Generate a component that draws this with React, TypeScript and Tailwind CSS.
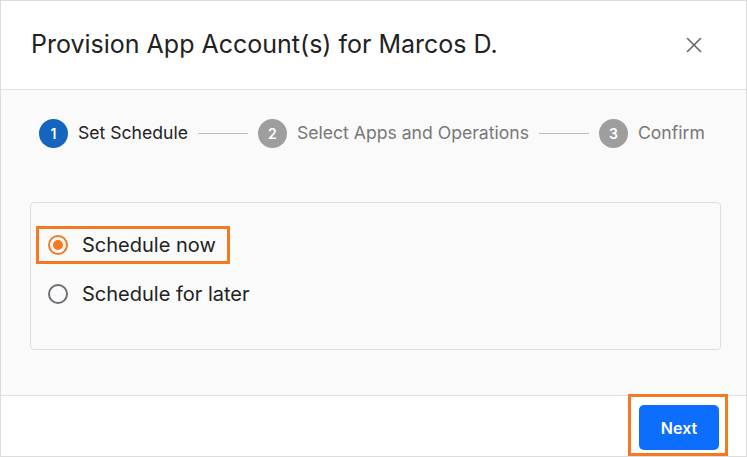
import { X } from "lucide-react";

const steps = [
  { n: 1, label: "Set Schedule", active: true },
  { n: 2, label: "Select Apps and Operations", active: false },
  { n: 3, label: "Confirm", active: false },
];

export default function App() {
  return (
    <div
      className="w-[747px] h-[457px] flex flex-col bg-white border border-[#dcdcdc] text-[#222]"
      style={{ fontFamily: "Inter, 'Noto Sans', sans-serif" }}
    >
      {/* header */}
      <div className="h-[89px] shrink-0 flex items-center justify-between pl-[30px] pr-[39px] border-b border-[#e0e0e0]">
        <h1 className="text-[25px] font-normal text-[#222]">Provision App Account(s) for Marcos D.</h1>
        <X className="w-[26px] h-[26px] text-[#666]" strokeWidth={1.5} />
      </div>

      {/* body */}
      <div className="flex-1 bg-[#fafafa] px-[29px] pt-[29px]">
        <div className="flex items-center pl-[9px] gap-[10px]">
          {steps.map((s, i) => (
            <div key={s.n} className="flex items-center gap-[10px]">
              {i > 0 && <div className="w-[50px] h-px bg-[#bdbdbd]" />}
              <div
                className={
                  s.active
                    ? "w-[29px] h-[29px] rounded-full bg-[#1565c0] text-white text-[14px] font-semibold flex items-center justify-center"
                    : "w-[29px] h-[29px] rounded-full bg-[#9e9e9e] text-white text-[14px] font-semibold flex items-center justify-center"
                }
              >
                {s.n}
              </div>
              <span className={s.active ? "text-[17.6px] text-[#222]" : "text-[17.6px] text-[#777]"}>{s.label}</span>
            </div>
          ))}
        </div>

        <div className="mt-[54px] w-[691px] h-[148px] border border-[#dedede] rounded-[4px] pt-[23px] pl-[5px]">
          <div className="inline-flex items-center gap-[14px] border-[3px] border-[#f47920] pl-[9px] pr-[11px] h-[38px]">
            <div className="w-[20px] h-[20px] rounded-full border-2 border-[#f47920] flex items-center justify-center">
              <div className="w-[10px] h-[10px] rounded-full bg-[#f47920]" />
            </div>
            <span className="text-[20px] text-[#222]">Schedule now</span>
          </div>
          <div className="flex items-center gap-[14px] pl-[12px] mt-[11px] h-[38px]">
            <div className="w-[20px] h-[20px] rounded-full border-2 border-[#6b6f76]" />
            <span className="text-[20px] text-[#222]">Schedule for later</span>
          </div>
        </div>
      </div>

      {/* footer */}
      <div className="h-[61px] shrink-0 border-t border-[#e0e0e0] bg-white flex justify-end items-end pr-[18px]">
        <div className="border-[3px] border-[#f47920] p-[8px] pr-[6px] pb-[3px]">
          <button className="w-[80px] h-[45px] rounded-[5px] bg-[#0d6efd] text-white text-[16px] font-semibold">
            Next
          </button>
        </div>
      </div>
    </div>
  );
}
